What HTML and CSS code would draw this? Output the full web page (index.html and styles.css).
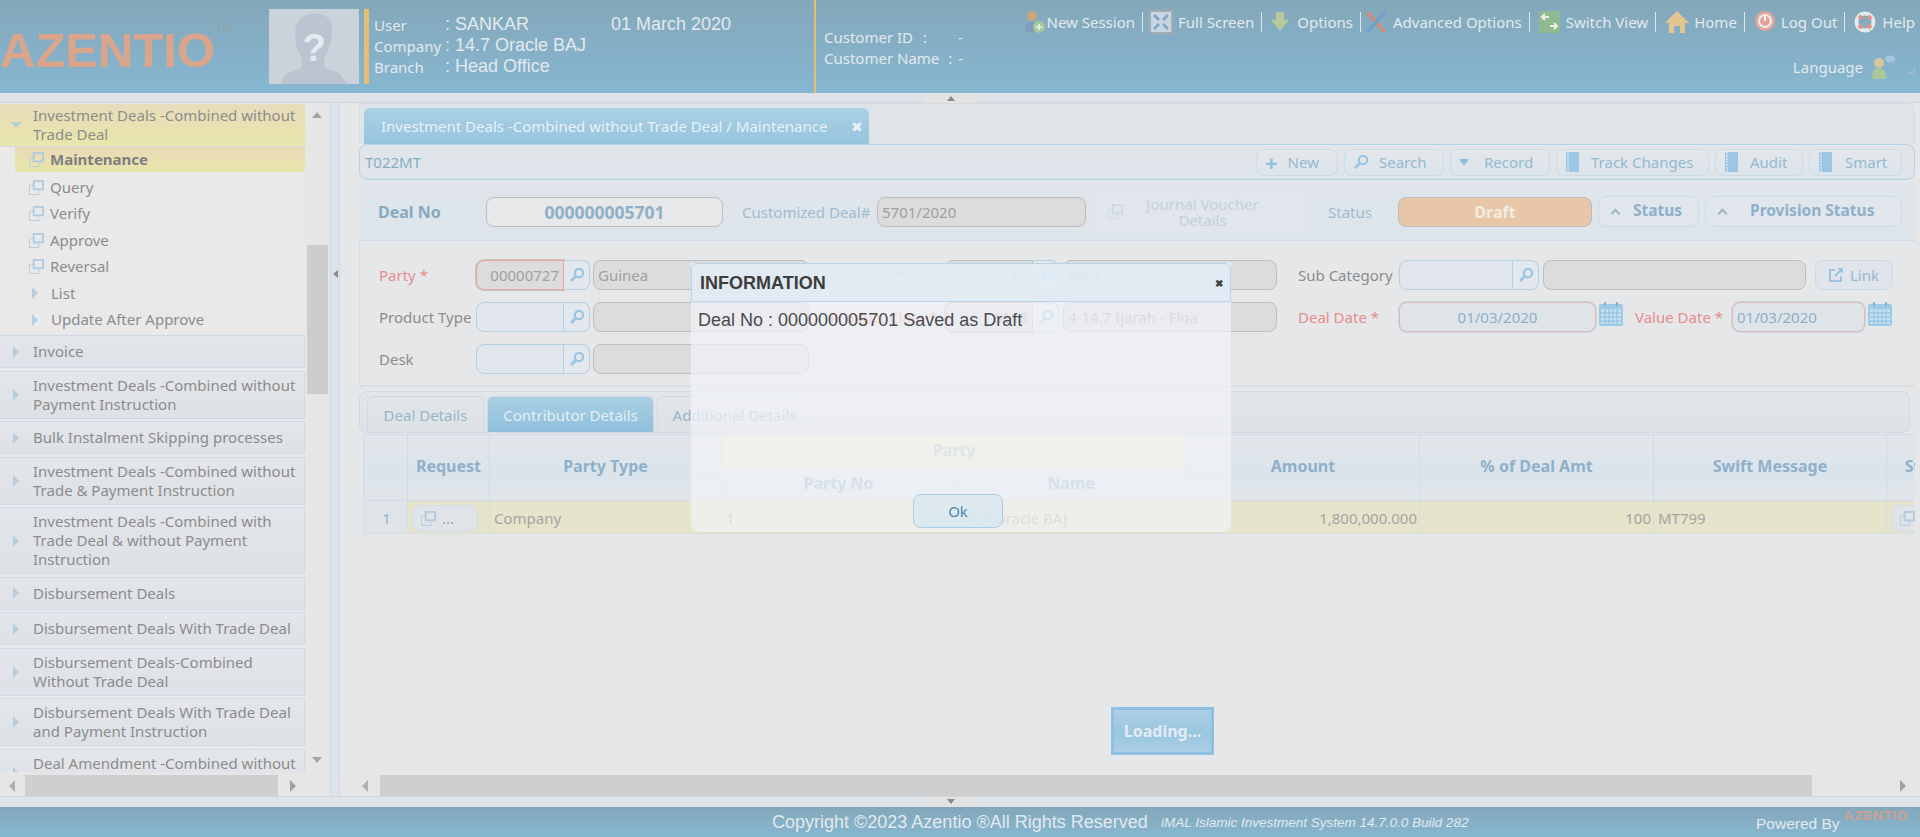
FILE: index.html
```html
<!DOCTYPE html>
<html lang="en">
<head>
<meta charset="utf-8"/>
<title>iMAL Islamic Investment System</title>
<link rel="stylesheet" href="styles.css">
</head>
<body>

<svg class="defs" width="0" height="0">
  <symbol id="win" viewBox="0 0 16 16">
    <path d="M1 6h4v-1h-5v11h11v-5h-1v4h-9z" fill="#b9cfe0"/>
    <rect x="5" y="1" width="10" height="9" fill="none" stroke="#b3cbe0" stroke-width="2"/>
  </symbol>
  <symbol id="lens" viewBox="0 0 16 16">
    <circle cx="10" cy="6" r="4.2" fill="none" stroke="#9cc6e3" stroke-width="2.2"/>
    <path d="M7 9l-5 5" stroke="#9cc6e3" stroke-width="3"/>
  </symbol>
  <symbol id="cal" viewBox="0 0 24 24">
    <rect x="0" y="2" width="24" height="22" rx="2" fill="#9ccbe6"/>
    <rect x="2" y="7" width="20" height="15" fill="#c4dff0"/>
    <path d="M2 11h20M2 15h20M2 19h20M6 7v15M10 7v15M14 7v15M18 7v15" stroke="#8fbfdf"/>
    <path d="M6 0v4M18 0v4" stroke="#7fb3d6" stroke-width="2"/>
  </symbol>
  <symbol id="book" viewBox="0 0 14 20">
    <rect x="1" y="0" width="13" height="20" fill="#9cc6e6"/>
    <path d="M3 0v20" stroke="#c9dff0" stroke-width="2" stroke-dasharray="2 1"/>
  </symbol>
</svg>

<header class="top-bar">
  <div class="logo">AZENTIO<sup>TM</sup></div>
  <div class="avatar">
    <svg viewBox="0 0 90 75" width="90" height="75">
      <rect width="90" height="75" fill="#cbd3da"/>
      <path d="M29 12c6-9 26-9 32-1 4 7 2 20-2 30-3 6-5 10-3 18l14 5 8 11h-66l4-10 16-6c2-8 0-12-3-18-4-9-4-22 0-29z" fill="#bac5d1"/>
      <text x="45" y="52" class="avatar-mark">?</text>
    </svg>
  </div>
  <div class="user-info">
    <div class="user-row"><span class="user-label">User</span><span class="user-val">: SANKAR</span><span class="user-date">01 March 2020</span></div>
    <div class="user-row"><span class="user-label">Company</span><span class="user-val">: 14.7 Oracle BAJ</span></div>
    <div class="user-row"><span class="user-label">Branch</span><span class="user-val">: Head Office</span></div>
  </div>
  <div class="customer">
    <div class="cust-row"><span class="cust-id">Customer ID</span><span class="cust-sep">:</span><span class="cust-val">-</span></div>
    <div class="cust-row"><span>Customer Name</span><span class="cust-sep2">:</span><span>-</span></div>
  </div>
  <div class="top-right">
    <nav class="top-links">
      <a class="top-link gap-1">
        <svg width="21" height="24" viewBox="0 0 21 24"><circle cx="8" cy="6" r="5" fill="#c9a878"/><path d="M1 22c0-8 3-10 7-10s7 3 7 10z" fill="#7d9cc0"/><circle cx="15" cy="17" r="6" fill="#a5c99a"/><path d="M15 14v6M12 17h6" stroke="#eef3ee" stroke-width="1.5"/></svg>
        New Session</a>
      <a class="top-link link-full">
        <svg width="24" height="24" viewBox="0 0 24 24"><rect x="1" y="1" width="22" height="22" fill="#c8d6e2" stroke="#a6a9b0" stroke-width="2"/><path d="M5 5l5 5M19 5l-5 5M5 19l5-5M19 19l-5-5" stroke="#7fa4c6" stroke-width="2.5"/></svg>
        Full Screen</a>
      <a class="top-link gap-8">
        <svg width="18" height="24" viewBox="0 0 18 24"><path d="M5 2h8v8h5l-9 11-9-11h5z" fill="#b7c99a"/></svg>
        Options</a>
      <a class="top-link gap-6 link-adv">
        <svg width="22" height="24" viewBox="0 0 22 24"><path d="M2 2l18 20" stroke="#d68b72" stroke-width="3"/><path d="M20 2l-18 20" stroke="#6f9fcb" stroke-width="3"/></svg>
        Advanced Options</a>
      <a class="top-link gap-6">
        <svg width="21" height="24" viewBox="0 0 21 24"><rect y="1" width="21" height="22" fill="#8fb98f"/><path d="M10 7h-7M6 4l-3 3 3 3M11 16h7M15 13l3 3-3 3" fill="none" stroke="#e8efe8" stroke-width="2"/></svg>
        Switch View</a>
      <a class="top-link">
        <svg width="24" height="24" viewBox="0 0 24 24"><path d="M12 1l12 12h-4v10h-5v-7h-6v7h-5v-10h-4z" fill="#e3c58f"/></svg>
        Home</a>
      <a class="top-link">
        <svg width="22" height="24" viewBox="0 0 22 24"><circle cx="11" cy="11" r="10" fill="#dfa79b"/><circle cx="11" cy="11" r="6" fill="none" stroke="#eef0ee" stroke-width="2"/><path d="M11 4v7" stroke="#eef0ee" stroke-width="2"/></svg>
        Log Out</a>
      <a class="top-link gap-6">
        <svg width="22" height="24" viewBox="0 0 22 24"><circle cx="11" cy="12" r="8.5" fill="none" stroke="#e5e9ea" stroke-width="4"/><path d="M5 6l3 3M17 6l-3 3M5 18l3-3M17 18l-3-3" stroke="#dd9480" stroke-width="4"/></svg>
        Help</a>
    </nav>
    <div class="language">Language
      <svg width="24" height="24" viewBox="0 0 24 24"><circle cx="8" cy="8" r="5" fill="#d8c59a"/><path d="M1 24c0-9 3-11 7-11s7 2 7 11z" fill="#a9c99a"/><ellipse cx="19" cy="4" rx="5" ry="3.5" fill="#a9c4de"/></svg>
      <span class="grip"></span>
    </div>
  </div>
</header>

<div class="h-strip"><span class="handle handle-up"></span></div>

<div class="workspace">
  <aside class="sidebar">
    <div class="side-top">
      <div class="side-list">
        <div class="menu-open"><span class="arrow-down"></span><span>Investment Deals -Combined without Trade Deal</span></div>
        <ul class="sub-menu">
          <li class="sub-item current"><svg class="ico-win"><use href="#win"/></svg>Maintenance</li>
          <li class="sub-item"><svg class="ico-win"><use href="#win"/></svg>Query</li>
          <li class="sub-item"><svg class="ico-win"><use href="#win"/></svg>Verify</li>
          <li class="sub-item"><svg class="ico-win"><use href="#win"/></svg>Approve</li>
          <li class="sub-item"><svg class="ico-win"><use href="#win"/></svg>Reversal</li>
          <li class="sub-item sub-folder"><span class="arrow-right"></span>List</li>
          <li class="sub-item sub-folder"><span class="arrow-right"></span>Update After Approve</li>
        </ul>
        <div class="menu-head"><span class="arrow-right"></span><span>Invoice</span></div>
        <div class="menu-head"><span class="arrow-right"></span><span>Investment Deals -Combined without Payment Instruction</span></div>
        <div class="menu-head"><span class="arrow-right"></span><span>Bulk Instalment Skipping processes</span></div>
        <div class="menu-head"><span class="arrow-right"></span><span>Investment Deals -Combined without Trade &amp; Payment Instruction</span></div>
        <div class="menu-head"><span class="arrow-right"></span><span>Investment Deals -Combined with Trade Deal &amp; without Payment Instruction</span></div>
        <div class="menu-head"><span class="arrow-right"></span><span>Disbursement Deals</span></div>
        <div class="menu-head"><span class="arrow-right"></span><span>Disbursement Deals With Trade Deal</span></div>
        <div class="menu-head"><span class="arrow-right"></span><span>Disbursement Deals-Combined Without Trade Deal</span></div>
        <div class="menu-head"><span class="arrow-right"></span><span>Disbursement Deals With Trade Deal and Payment Instruction</span></div>
        <div class="menu-head"><span class="arrow-right"></span><span>Deal Amendment -Combined without Trade Deal</span></div>
      </div>
      <div class="v-scroll">
        <span class="tri-up"></span>
        <span class="v-thumb"></span>
        <span class="tri-down"></span>
      </div>
    </div>
    <div class="h-scroll side-hscroll">
      <span class="tri-left"></span>
      <span class="h-thumb"></span>
      <span class="tri-right"></span>
    </div>
  </aside>

  <div class="splitter"><span class="tri-left small"></span></div>

  <main class="main">
    <div class="tab-strip">
      <div class="doc-tab">Investment Deals -Combined without Trade Deal / Maintenance<span class="doc-close">✖</span></div>
    </div>

    <div class="tool-row">
      <span class="screen-code">T022MT</span>
      <div class="tool-btns">
        <button class="tool-btn btn-new"><span class="plus">+</span>New</button>
        <button class="tool-btn btn-search"><svg class="ico-lens"><use href="#lens"/></svg>Search</button>
        <button class="tool-btn btn-record"><span class="mini-down"></span>Record</button>
        <button class="tool-btn btn-track"><svg class="ico-book"><use href="#book"/></svg>Track Changes</button>
        <button class="tool-btn btn-audit"><svg class="ico-book"><use href="#book"/></svg>Audit</button>
        <button class="tool-btn btn-smart"><svg class="ico-book"><use href="#book"/></svg>Smart</button>
      </div>
    </div>

    <section class="deal-panel">
      <span class="deal-label">Deal No</span>
      <div class="deal-no">000000005701</div>
      <span class="custom-label">Customized Deal#</span>
      <div class="field grey custom-val">5701/2020</div>
      <button class="journal-btn"><svg class="ico-win faint"><use href="#win"/></svg><span>Journal Voucher Details</span></button>
      <span class="status-label">Status</span>
      <div class="draft">Draft</div>
      <button class="status-btn btn-status"><span class="caret"></span>Status</button>
      <button class="status-btn btn-prov"><span class="caret"></span>Provision Status</button>
    </section>

    <section class="form-panel">
      <div class="form-row">
        <label class="lbl lbl-a req">Party *</label>
        <div class="lookup lookup-w"><div class="field grey bad num">00000727</div><span class="look-btn"><svg class="ico-lens"><use href="#lens"/></svg></span></div>
        <div class="field grey name-a">Guinea</div>
        <label class="lbl lbl-b req">Category *</label>
        <div class="lookup lookup-w"><div class="field grey num">11</div><span class="look-btn"><svg class="ico-lens"><use href="#lens"/></svg></span></div>
        <div class="field grey name-b">Ijara</div>
        <label class="lbl lbl-c">Sub Category</label>
        <div class="lookup lookup-c"><div class="field"></div><span class="look-btn"><svg class="ico-lens"><use href="#lens"/></svg></span></div>
        <div class="field grey name-c"></div>
        <button class="link-btn"><svg width="14" height="14" viewBox="0 0 14 14"><path d="M6 2h-5v11h11v-5" fill="none" stroke="#8fbcdc" stroke-width="1.6"/><path d="M6 8l7-7M9 1h4v4" fill="none" stroke="#8fbcdc" stroke-width="1.6"/></svg>Link</button>
      </div>
      <div class="form-row">
        <label class="lbl lbl-a">Product Type</label>
        <div class="lookup lookup-w"><div class="field"></div><span class="look-btn"><svg class="ico-lens"><use href="#lens"/></svg></span></div>
        <div class="field grey name-a"></div>
        <label class="lbl lbl-b req">Product Class *</label>
        <div class="lookup lookup-w"><div class="field grey bad num">0118</div><span class="look-btn"><svg class="ico-lens"><use href="#lens"/></svg></span></div>
        <div class="field grey name-b">4-14.7 Ijarah - Floa</div>
        <label class="lbl lbl-c req">Deal Date *</label>
        <div class="field date date-deal">01/03/2020</div>
        <svg class="ico-cal"><use href="#cal"/></svg>
        <label class="lbl lbl-d req">Value Date *</label>
        <div class="field date date-value">01/03/2020</div>
        <svg class="ico-cal cal-last"><use href="#cal"/></svg>
      </div>
      <div class="form-row">
        <label class="lbl lbl-a">Desk</label>
        <div class="lookup lookup-w"><div class="field"></div><span class="look-btn"><svg class="ico-lens"><use href="#lens"/></svg></span></div>
        <div class="field grey name-a"></div>
      </div>
    </section>

    <div class="tabs-panel">
      <span class="sub-tab tab-deal">Deal Details</span>
      <span class="sub-tab active tab-contrib">Contributor Details</span>
      <span class="sub-tab tab-extra">Additional Details</span>
    </div>

    <div class="grid-wrap">
      <table class="grid">
        <colgroup>
          <col class="c-num"><col class="c-req"><col class="c-type"><col class="c-no"><col class="c-name"><col class="c-amt"><col class="c-pct"><col class="c-swift"><col class="c-sw">
        </colgroup>
        <thead>
          <tr>
            <th rowspan="2"></th>
            <th rowspan="2">Request</th>
            <th rowspan="2">Party Type</th>
            <th colspan="2" class="th-group">Party</th>
            <th rowspan="2">Amount</th>
            <th rowspan="2">% of Deal Amt</th>
            <th rowspan="2">Swift Message</th>
            <th rowspan="2">Swift</th>
          </tr>
          <tr>
            <th class="th-sub">Party No</th>
            <th class="th-sub">Name</th>
          </tr>
        </thead>
        <tbody>
          <tr>
            <td class="td-num">1</td>
            <td><span class="req-btn"><svg class="ico-win blue"><use href="#win"/></svg>...</span></td>
            <td>Company</td>
            <td>1</td>
            <td>14.7 Oracle BAJ</td>
            <td class="right">1,800,000.000</td>
            <td class="right">100</td>
            <td>MT799</td>
            <td><span class="req-btn"><svg class="ico-win blue"><use href="#win"/></svg></span></td>
          </tr>
        </tbody>
      </table>
    </div>

    <div class="h-scroll main-hscroll">
      <span class="tri-left"></span>
      <span class="h-thumb"></span>
      <span class="tri-right"></span>
    </div>
  </main>
</div>

<div class="h-strip bottom-strip"><span class="handle handle-down"></span></div>

<footer class="bottom-bar">
  <span class="copy">Copyright ©2023 Azentio ®All Rights Reserved</span>
  <span class="build">iMAL Islamic Investment System 14.7.0.0 Build 282</span>
  <span class="powered">Powered By</span>
  <span class="mini-logo">AZENTIO</span>
</footer>

<div class="dialog">
  <div class="dialog-title"><span>INFORMATION</span><span class="dialog-x">✖</span></div>
  <div class="dialog-body">Deal No : 000000005701 Saved as Draft</div>
  <button class="dialog-ok">Ok</button>
</div>

<div class="loading"><span>Loading...</span></div>

</body>
</html>
```

FILE: styles.css
```css
* {
  box-sizing: border-box;
}

html, body {
  height: 100%;
}

body {
  margin: 0;
  display: flex;
  flex-direction: column;
  overflow: hidden;
  background: #e5e7e9;
  font-family: "Noto Sans", "Liberation Sans", sans-serif;
  font-size: 15px;
  color: #8c8c8c;
}

button {
  font-family: inherit;
  cursor: pointer;
}

.defs {
  position: absolute;
}

/* top header */
.top-bar {
  height: 93px;
  flex: none;
  display: flex;
  background: linear-gradient(#84a7ba, #86b7d1);
  color: #e3e9ec;
}

.logo {
  width: 269px;
  flex: none;
  padding-top: 23px;
  font-family: "Liberation Sans", sans-serif;
  font-size: 49px;
  line-height: 55px;
  font-weight: bold;
  color: #dba58c;
  white-space: nowrap;
}

.logo sup {
  font-size: 12px;
  font-weight: normal;
  line-height: 0;
  color: #8fa3ae;
  vertical-align: 36px;
}

.avatar {
  width: 90px;
  height: 75px;
  flex: none;
  margin-top: 9px;
}

.avatar-mark {
  font: bold 38px "Liberation Sans", sans-serif;
  fill: #e6eaee;
  text-anchor: middle;
}

.user-info {
  width: 450px;
  height: 75px;
  flex: none;
  margin: 9px 0 0 5px;
  padding: 5px 0 0 5px;
  border-left: 5px solid #e6bd72;
}

.user-row {
  display: flex;
  align-items: center;
  height: 21px;
}

.user-label {
  width: 71px;
  font-size: 15px;
}

.user-val {
  width: 166px;
  font-family: "Liberation Sans", sans-serif;
  font-size: 18px;
}

.user-date {
  font-family: "Liberation Sans", sans-serif;
  font-size: 18px;
}

.customer {
  width: 212px;
  flex: none;
  padding: 26px 0 0 8px;
  border-left: 2px solid #e6bd72;
}

.cust-row {
  display: flex;
  height: 21px;
  align-items: center;
}

.cust-id {
  width: 99px;
}

.cust-sep {
  width: 35px;
}

.cust-sep2 {
  margin: 0 6px 0 9px;
}

.top-right {
  flex: 1;
  min-width: 0;
  display: flex;
  flex-direction: column;
  align-items: flex-end;
  padding: 9px 5px 0 0;
}

.top-links {
  display: flex;
  align-items: center;
  height: 26px;
}

.top-link {
  display: flex;
  align-items: center;
  gap: 5px;
  height: 20px;
  padding: 0 7px 0 9px;
  border-right: 1px solid #dfe6ea;
  white-space: nowrap;
}

.top-link.gap-1 { gap: 1px; }
.top-link.gap-6 { gap: 6px; }
.top-link.gap-8 { gap: 8px; }
.top-link.link-full { padding-left: 6px; }
.top-link.link-adv { padding-left: 4px; }

.top-link:last-child {
  border-right: none;
  padding-right: 0;
}

.language {
  display: flex;
  align-items: center;
  gap: 8px;
  margin-top: 20px;
}

.grip {
  width: 7px;
  height: 7px;
  margin: 6px 0 0 5px;
  border-right: 2px solid #9cb9ca;
  border-bottom: 2px solid #9cb9ca;
}

/* thin bars above and below the work area */
.h-strip {
  height: 10px;
  flex: none;
  position: relative;
  background: #dee3e8;
  border-bottom: 1px solid #ccd9e5;
}

.bottom-strip {
  height: 11px;
  border-top: 1px solid #ccd9e5;
  border-bottom: none;
}

.handle {
  position: absolute;
  left: 925px;
  width: 52px;
  height: 9px;
  background: #e3e3e3;
}

.handle::after {
  content: "";
  position: absolute;
  left: 22px;
  top: 2px;
  border-left: 4px solid transparent;
  border-right: 4px solid transparent;
}

.handle-up {
  top: 1px;
}

.handle-up::after {
  border-bottom: 5px solid #8a8a8a;
}

.handle-down::after {
  border-top: 5px solid #8a8a8a;
}

.workspace {
  flex: 1;
  display: flex;
  min-height: 0;
}

/* left menu */
.sidebar {
  width: 330px;
  flex: none;
  display: flex;
  flex-direction: column;
  padding-top: 1px;
}

.side-top {
  flex: 1;
  min-height: 0;
  display: flex;
}

.side-list {
  width: 305px;
  overflow: hidden;
  background: #e9e9e9;
  line-height: 19px;
}

.menu-open {
  display: flex;
  align-items: center;
  height: 43px;
  padding-left: 10px;
  background: linear-gradient(#e8dcbc, #e8e6aa);
  border-bottom: 1px solid #d4dce2;
}

.menu-open > span:last-child {
  margin-left: 11px;
}

.menu-head > span:last-child {
  margin-left: 14px;
}

.menu-head {
  display: flex;
  align-items: center;
  padding: 4px 0 4px 13px;
  min-height: 33px;
  margin-bottom: 2.5px;
  background: linear-gradient(#e3e6ea, #dde2e7);
  border-top: 1px solid #cddbe8;
  border-bottom: 1px solid #cddbe8;
  border-right: 1px solid #cddbe8;
}

.arrow-down {
  flex: none;
  border-left: 6px solid transparent;
  border-right: 6px solid transparent;
  border-top: 6px solid #b7cede;
}

.arrow-right {
  flex: none;
  border-top: 6px solid transparent;
  border-bottom: 6px solid transparent;
  border-left: 6px solid #b7cede;
}

.sub-menu {
  list-style: none;
  margin: 0 0 2px;
  padding: 0;
}

.sub-item {
  display: flex;
  align-items: center;
  height: 26.5px;
  margin-left: 15px;
  padding-left: 14px;
}

.sub-item.current {
  height: 25px;
  margin-bottom: 2px;
  font-weight: bold;
  color: #7e7e7e;
  background: linear-gradient(#ead9b8, #e8e6aa);
}

.sub-folder .arrow-right {
  margin: 0 13px 0 3px;
}

.ico-win {
  width: 15px;
  height: 15px;
  margin-right: 6px;
  flex: none;
}

.ico-win.faint {
  opacity: .45;
}

.v-scroll {
  width: 25px;
  flex: none;
  position: relative;
  background: #e6e6e6;
}

.v-thumb {
  position: absolute;
  top: 141px;
  left: 2px;
  width: 21px;
  height: 149px;
  background: #cdcdcd;
}

.tri-up, .tri-down {
  position: absolute;
  left: 7px;
  border-left: 5px solid transparent;
  border-right: 5px solid transparent;
}

.tri-up {
  top: 8px;
  border-bottom: 6px solid #a6a6a6;
}

.tri-down {
  bottom: 9px;
  border-top: 6px solid #a6a6a6;
}

.tri-left {
  flex: none;
  border-top: 6px solid transparent;
  border-bottom: 6px solid transparent;
  border-right: 6px solid #b0b0b0;
}

.tri-left.small {
  border-top-width: 4px;
  border-bottom-width: 4px;
  border-right: 5px solid #8a8a8a;
}

.tri-right {
  flex: none;
  border-top: 6px solid transparent;
  border-bottom: 6px solid transparent;
  border-left: 6px solid #a0a0a0;
}

.h-scroll {
  height: 21px;
  flex: none;
  display: flex;
  align-items: center;
  background: #e6e6e6;
}

.h-thumb {
  height: 21px;
  background: #cfcfcf;
}

.side-hscroll {
  height: 24px;
  padding: 3px 0 0 9px;
}

.side-hscroll .h-thumb {
  width: 253px;
  margin: 0 12px 0 10px;
}

.splitter {
  width: 10px;
  flex: none;
  display: flex;
  align-items: center;
  justify-content: center;
  padding-bottom: 352px;
  background: #dde3e9;
  border-left: 1px solid #cddbe8;
  border-right: 1px solid #cddbe8;
}

/* main area */
.main {
  flex: 1;
  min-width: 0;
  display: flex;
  flex-direction: column;
  padding: 0 5px 0 19px;
  position: relative;
}

.tab-strip {
  height: 41px;
  flex: none;
  padding: 4px 0 0 4px;
  background: #e0e4e8;
  border: 1px solid #d4dce2;
  border-bottom: none;
  border-radius: 0 8px 0 0;
}

.doc-tab {
  display: flex;
  align-items: center;
  width: 505px;
  height: 36px;
  padding: 0 6px 0 17px;
  border-radius: 6px 6px 0 0;
  background: linear-gradient(#abd0e4, #96c4df);
  color: #e8f1f6;
  white-space: nowrap;
}

.doc-close {
  margin-left: auto;
  font-size: 14px;
}

.tool-row {
  height: 36px;
  flex: none;
  display: flex;
  align-items: center;
  justify-content: space-between;
  padding: 0 12px 0 5px;
  background: linear-gradient(#e2e6ea, #dde4ea);
  border: 1px solid #b2d3e8;
  border-radius: 8px;
  color: #87aec6;
}

.tool-btns {
  display: flex;
  gap: 6px;
}

.tool-btn {
  height: 27px;
  display: flex;
  align-items: center;
  gap: 10px;
  padding: 0 0 0 8px;
  font-size: 15px;
  color: #95b9d1;
  background: linear-gradient(#e3e7eb, #dde4ea);
  border: 1px solid #c9dbe8;
  border-radius: 8px;
}

.btn-new { width: 82px; }
.btn-search { width: 100px; }
.btn-record { width: 100px; }
.btn-track { width: 153px; gap: 12px; }
.btn-audit { width: 88px; gap: 12px; }
.btn-smart { width: 93px; gap: 13px; }

.plus {
  font-size: 22px;
  font-weight: bold;
  line-height: 20px;
  color: #92c0e0;
}

.ico-lens {
  width: 16px;
  height: 16px;
  flex: none;
}

.ico-book {
  width: 14px;
  height: 20px;
  flex: none;
}

.mini-down {
  border-left: 5px solid transparent;
  border-right: 5px solid transparent;
  border-top: 7px solid #92c0e0;
  margin-right: 5px;
}

.deal-panel {
  height: 58px;
  flex: none;
  margin-top: 3px;
  display: flex;
  align-items: center;
  padding-left: 19px;
  background: linear-gradient(#dfe5ea, #dde5ec);
  border-bottom: 1px solid #cddbe8;
}

.deal-label {
  width: 108px;
  font-size: 16px;
  font-weight: bold;
  color: #86a9c2;
}

.deal-no {
  width: 237px;
  height: 30px;
  line-height: 28px;
  text-align: center;
  font-weight: bold;
  font-size: 17.5px;
  color: #8fb0c9;
  background: #e7e8e9;
  border: 1px solid #bdbdbd;
  border-radius: 8px;
}

.custom-label {
  width: 135px;
  margin-left: 19px;
  color: #9dbcd1;
  white-space: nowrap;
}

.field {
  height: 30px;
  line-height: 28px;
  padding: 0 4px;
  border: 1px solid #b5cfe2;
  border-radius: 8px;
  color: #a0a0a0;
  white-space: nowrap;
  overflow: hidden;
}

.field.grey {
  background: #dcdcdc;
  border-color: #bdbdbd;
}

.custom-val {
  width: 209px;
}

.journal-btn {
  width: 214px;
  height: 47px;
  margin-left: 7px;
  display: flex;
  align-items: center;
  padding: 0 30px 0 14px;
  font-size: 15px;
  line-height: 16px;
  color: #c4d0da;
  background: #e0e6eb;
  border: 1px solid #d8e1e8;
  border-radius: 8px;
}

.journal-btn span {
  flex: 1;
  text-align: center;
}

.status-label {
  width: 70px;
  margin-left: 21px;
  color: #9dbcd1;
}

.draft {
  width: 194px;
  height: 30px;
  line-height: 28px;
  text-align: center;
  font-size: 16px;
  font-weight: bold;
  color: #f1ece4;
  background: #e8c7a9;
  border: 1px solid #bdbdbd;
  border-radius: 8px;
}

.status-btn {
  height: 31px;
  margin-left: 6px;
  display: flex;
  align-items: center;
  gap: 14px;
  padding: 0 0 3px 13px;
  font-size: 15.5px;
  font-weight: bold;
  color: #8fb0c9;
  background: #e0e6eb;
  border: 1px solid #cddbe8;
  border-radius: 8px;
}

.btn-status { width: 101px; }
.btn-prov { width: 197px; gap: 24px; }

.caret {
  width: 7px;
  height: 7px;
  margin-top: 6px;
  border-left: 2px solid #9cb4c6;
  border-top: 2px solid #9cb4c6;
  transform: rotate(45deg);
}

.form-panel {
  height: 146px;
  flex: none;
  display: flex;
  flex-direction: column;
  gap: 12px;
  padding: 19px 0 0 19px;
  border-left: 1px solid #d9dde0;
  border-bottom: 2px solid #dcdfe2;
}

.form-row {
  display: flex;
  align-items: center;
  height: 30px;
}

.lbl {
  flex: none;
  white-space: nowrap;
}

.lbl.req {
  color: #e88c8c;
}

.lbl-a { width: 97px; }
.lbl-b { width: 115px; margin-left: 21px; }
.lbl-c { width: 101px; margin-left: 21px; }
.lbl-d { width: 97px; margin-left: 12px; }

.lookup {
  flex: none;
  display: flex;
  height: 30px;
}

.lookup .field {
  flex: 1;
  border-radius: 8px 0 0 8px;
  background: #e0e6eb;
}

.lookup .field.grey {
  background: #dcdcdc;
}

.lookup .field.bad {
  border-color: #e8a5a0;
  box-shadow: 0 0 0 1px #c5c5c5;
}

.lookup-w { width: 114px; }
.lookup-c { width: 140px; }

.look-btn {
  width: 26px;
  flex: none;
  display: flex;
  align-items: center;
  justify-content: center;
  border: 1px solid #b5cfe2;
  border-left: none;
  border-radius: 0 8px 8px 0;
  background: #e2e8ed;
}

.num {
  text-align: right;
}

.name-a { width: 216px; margin-left: 3px; flex: none; }
.name-b { width: 214px; margin-left: 4px; flex: none; }
.name-c { width: 263px; margin-left: 4px; flex: none; }

.link-btn {
  width: 78px;
  height: 30px;
  margin-left: 9px;
  display: flex;
  align-items: center;
  gap: 7px;
  padding: 0 0 0 13px;
  font-size: 15px;
  color: #95b9d1;
  background: #dfe5ea;
  border: 1px solid #cddbe8;
  border-radius: 8px;
}

.date {
  flex: none;
  text-align: center;
  color: #8bb0c8;
  background: #dfe4e9;
  border: 1px solid #e8b5b2;
  box-shadow: 0 0 0 1px #c8d8e4;
}

.date-deal { width: 197px; }
.date-value { width: 133px; text-align: left; }

.ico-cal {
  width: 24px;
  height: 24px;
  margin: -6px 0 0 3px;
  flex: none;
}

.tabs-panel {
  height: 42px;
  flex: none;
  margin-top: 4px;
  display: flex;
  align-items: flex-end;
  gap: 3px;
  padding-left: 7px;
  margin-right: 5px;
  background: linear-gradient(#e3e6e9, #dde2e6);
  border: 1px solid #d0dae2;
  border-radius: 8px;
}

.sub-tab {
  height: 36px;
  line-height: 36px;
  text-align: center;
  color: #96b5ca;
  border: 1px solid #cddbe8;
  border-bottom: none;
  border-radius: 6px 6px 0 0;
}

.sub-tab.active {
  color: #e5eff5;
  background: linear-gradient(#a9cfe3, #90c0dc);
}

.tab-deal { width: 117px; }
.tab-contrib { width: 167px; }
.tab-extra { width: 155px; }

.grid-wrap {
  flex: 1;
  min-height: 0;
  overflow: hidden;
  padding: 1px 0 0 4px;
}

.grid {
  width: 1600px;
  table-layout: fixed;
  border-collapse: collapse;
}

.c-num { width: 44px; }
.c-req { width: 82px; }
.c-type { width: 232px; }
.c-no { width: 234px; }
.c-name { width: 231px; }
.c-amt { width: 233px; }
.c-pct { width: 234px; }
.c-swift { width: 233px; }
.c-sw { width: 77px; }

.grid th {
  height: 33px;
  padding: 0 0 3px;
  font-size: 16px;
  font-weight: bold;
  color: #8fb0c9;
  background: linear-gradient(#e2e5e9, #dbe4eb 60%, #e1e5e9);
  border: 1px solid #cddbe8;
}

.grid th.th-group {
  background: #ecebc9;
  color: #a9bfd0;
}

.grid td {
  height: 33px;
  padding: 2px 2px 0 4px;
  color: #a5a5a0;
  background: #e7e4cc;
  border: 1px solid #d8dde0;
  white-space: nowrap;
}

.grid td.td-num {
  text-align: center;
  color: #93b3ca;
  background: #dfe4e9;
}

.grid td.right {
  text-align: right;
}

.req-btn {
  display: flex;
  align-items: center;
  gap: 6px;
  width: 66px;
  height: 27px;
  padding-left: 8px;
  background: #e0e4e8;
  border: 1px solid #d2dde8;
  border-radius: 8px;
}

.ico-win.blue {
  margin-right: 0;
}

.main-hscroll {
  margin: 0 -5px 0 -19px;
  padding-left: 22px;
}

.main-hscroll .h-thumb {
  width: 1432px;
  margin-left: 12px;
  margin-right: 88px;
}

/* footer */
.bottom-bar {
  height: 30px;
  flex: none;
  display: flex;
  align-items: center;
  padding-left: 772px;
  background: linear-gradient(#84a7ba, #86b7d1);
  color: #e3e9ec;
  font-family: "Liberation Sans", sans-serif;
}

.copy {
  width: 389px;
  font-size: 18px;
  white-space: nowrap;
}

.build {
  width: 595px;
  font-size: 13.5px;
  font-style: italic;
  white-space: nowrap;
}

.powered {
  width: 88px;
  padding-top: 3px;
  font-size: 15.5px;
  white-space: nowrap;
}

.mini-logo {
  font-size: 13px;
  font-weight: bold;
  letter-spacing: 1px;
  color: #d3a08d;
  margin-top: -14px;
}

/* message box and loading box sit over the page */
.dialog {
  position: absolute;
  left: 691px;
  top: 263px;
  width: 540px;
  height: 269px;
  display: flex;
  flex-direction: column;
  background: rgba(241, 243, 246, .72);
  border-radius: 0 0 8px 8px;
  font-family: "Liberation Sans", sans-serif;
}

.dialog-title {
  height: 39px;
  flex: none;
  display: flex;
  align-items: center;
  justify-content: space-between;
  padding: 1px 7px 0 8px;
  background: rgba(221, 234, 244, .7);
  border: 1px solid #b6d5ea;
  border-radius: 6px 6px 0 0;
  font-size: 18px;
  font-weight: bold;
  color: #3d3d3d;
}

.dialog-x {
  font-size: 10px;
}

.dialog-body {
  padding: 8px 0 0 7px;
  font-size: 18px;
  color: #4a4a4f;
}

.dialog-ok {
  width: 90px;
  height: 34px;
  margin: auto 0 4px 222px;
  font-family: "Noto Sans", sans-serif;
  font-size: 15px;
  color: #4f8bb0;
  background: linear-gradient(rgba(219, 232, 241, .75), rgba(211, 230, 241, .75));
  border: 1px solid #a9cde5;
  border-radius: 8px;
}

.loading {
  position: absolute;
  left: 1111px;
  top: 707px;
  width: 103px;
  height: 48px;
  display: flex;
  align-items: center;
  justify-content: center;
  background: linear-gradient(#add0e4, #99c6e0 60%, #add0e4);
  border: 3px solid #8fc0e4;
  font-size: 16px;
  font-weight: bold;
  color: #e3edf3;
}
```
